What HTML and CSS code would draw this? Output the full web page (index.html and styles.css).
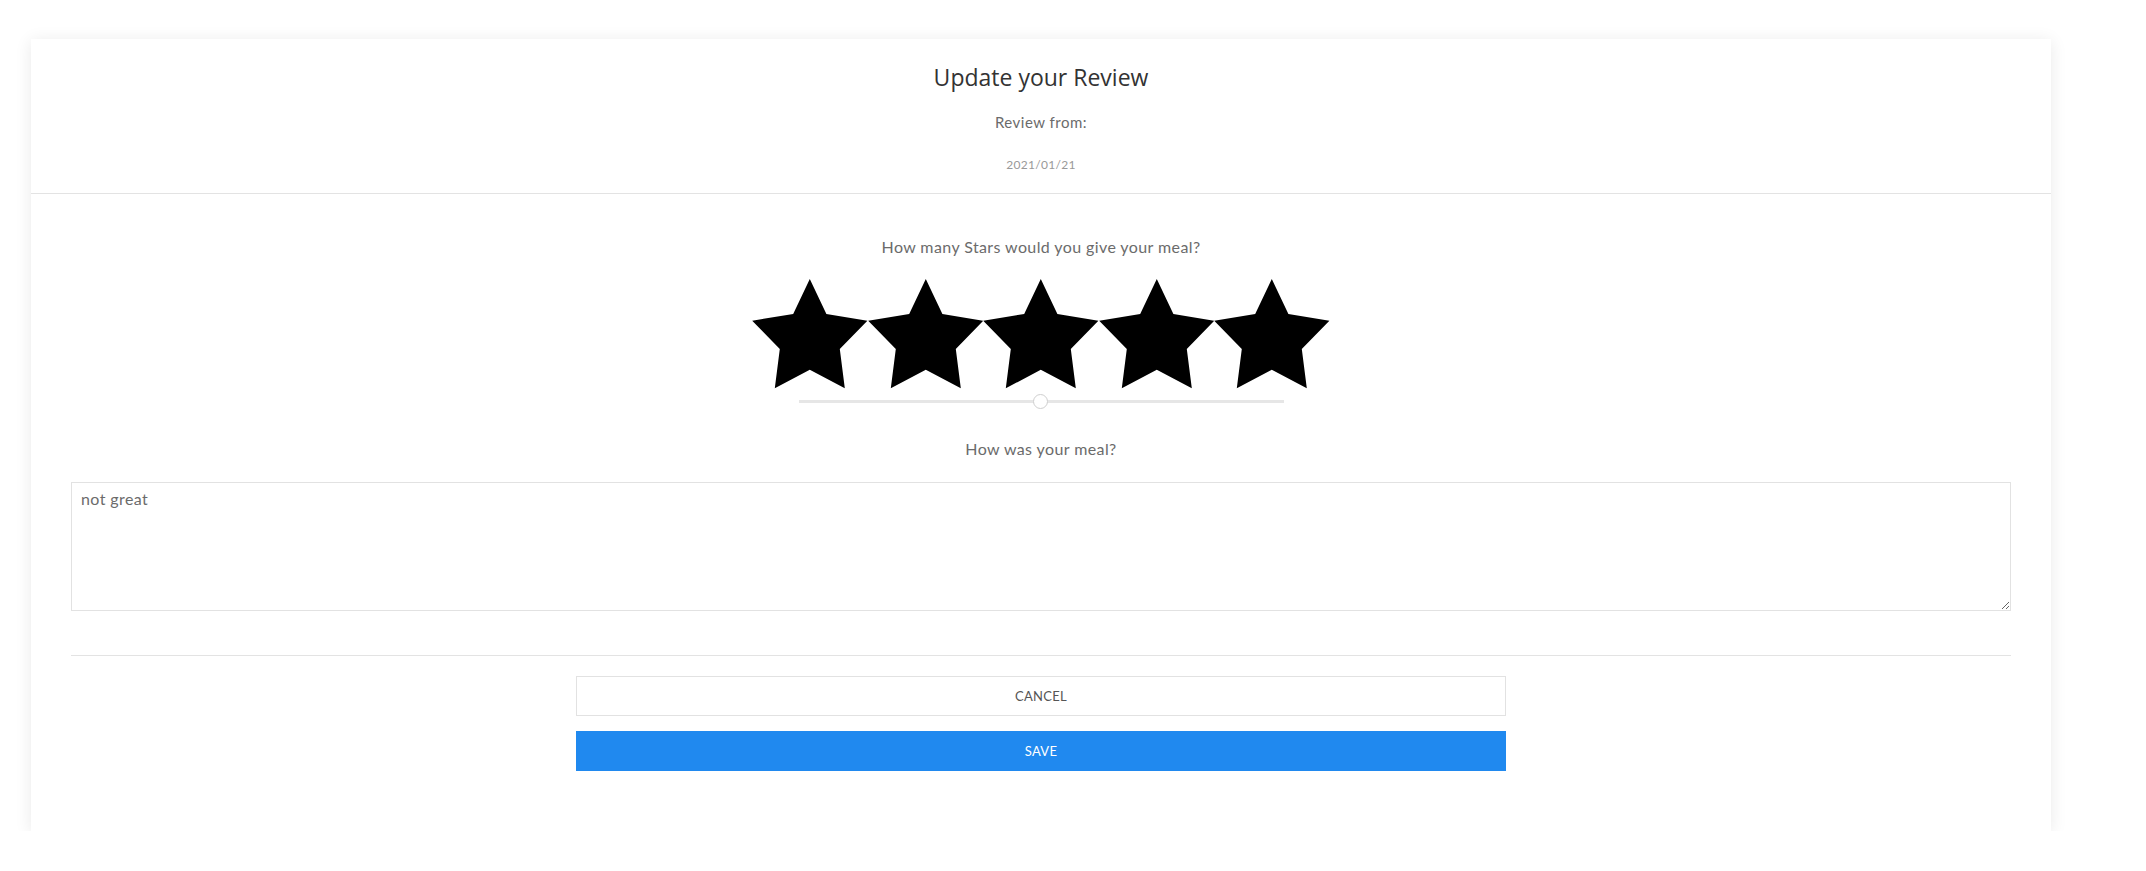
FILE: index.html
```html
<!DOCTYPE html>
<html lang="en">
<head>
<meta charset="utf-8">
<title>Update your Review</title>
<link rel="stylesheet" href="styles.css">
</head>
<body>
<div class="card">
  <div class="card-header">
    <h1 class="title">Update your Review</h1>
    <p class="subtitle">Review from:</p>
    <p class="date">2021/01/21</p>
  </div>
  <div class="card-body">
    <p class="question">How many Stars would you give your meal?</p>
    <div class="stars">
      <svg class="star" viewBox="0 0 115.2 110" aria-hidden="true"><polygon points="57.6,0 74.2,35 115.2,41.7 87.6,70 92.6,109.3 57.6,90.7 22.6,109.3 27.6,70 0,41.7 41,35"/></svg>
      <svg class="star" viewBox="0 0 115.2 110" aria-hidden="true"><polygon points="57.6,0 74.2,35 115.2,41.7 87.6,70 92.6,109.3 57.6,90.7 22.6,109.3 27.6,70 0,41.7 41,35"/></svg>
      <svg class="star" viewBox="0 0 115.2 110" aria-hidden="true"><polygon points="57.6,0 74.2,35 115.2,41.7 87.6,70 92.6,109.3 57.6,90.7 22.6,109.3 27.6,70 0,41.7 41,35"/></svg>
      <svg class="star" viewBox="0 0 115.2 110" aria-hidden="true"><polygon points="57.6,0 74.2,35 115.2,41.7 87.6,70 92.6,109.3 57.6,90.7 22.6,109.3 27.6,70 0,41.7 41,35"/></svg>
      <svg class="star" viewBox="0 0 115.2 110" aria-hidden="true"><polygon points="57.6,0 74.2,35 115.2,41.7 87.6,70 92.6,109.3 57.6,90.7 22.6,109.3 27.6,70 0,41.7 41,35"/></svg>
    </div>
    <div class="slider">
      <div class="track"></div>
      <div class="thumb"></div>
    </div>
    <p class="question meal">How was your meal?</p>
    <textarea class="review-text">not great</textarea>
    <hr class="divider">
    <div class="actions">
      <button class="btn btn-cancel" type="button">Cancel</button>
      <button class="btn btn-save" type="button">Save</button>
    </div>
  </div>
</div>
</body>
</html>
```

FILE: styles.css
```css
* { box-sizing: border-box; }

html, body {
  margin: 0;
  padding: 0;
  background: #ffffff;
}

body {
  font-family: Lato, "Open Sans", "Liberation Sans", sans-serif;
  color: #6b6b6b;
}

.card {
  margin: 39px 0 0 31px;
  width: 2020px;
  background: #ffffff;
  box-shadow: 0 2px 16px rgba(0, 0, 0, 0.09);
}

.card-header {
  padding: 23px 0 20px;
  border-bottom: 1px solid #e3e3e3;
  text-align: center;
}

.title {
  margin: 0;
  font-family: "Open Sans", "Noto Sans", sans-serif;
  font-weight: 400;
  font-size: 23px;
  line-height: 30px;
  color: #333333;
}

.subtitle {
  margin: 20px 0 0;
  font-size: 15px;
  line-height: 20px;
  letter-spacing: 0.5px;
  color: #6b6b6b;
}

.date {
  margin: 25px 0 0;
  font-size: 12px;
  line-height: 16px;
  color: #999999;
  letter-spacing: 0.3px;
}

.card-body {
  padding: 43px 40px 60px;
  display: flex;
  flex-direction: column;
  align-items: center;
}

.question {
  margin: 0;
  font-size: 16px;
  line-height: 20px;
  letter-spacing: 0.4px;
  color: #6b6b6b;
}

.stars {
  margin-top: 22px;
  display: flex;
  height: 110px;
}

.star {
  width: 115.6px;
  height: 110px;
  display: block;
}

.star polygon { fill: #000000; }

.slider {
  position: relative;
  margin-top: 5px;
  width: 485px;
  height: 15px;
  display: flex;
  align-items: center;
}

.track {
  width: 100%;
  height: 3px;
  background: #e6e6e6;
}

.thumb {
  position: absolute;
  left: 50%;
  top: 0;
  width: 15px;
  height: 15px;
  margin-left: -8px;
  border-radius: 50%;
  background: #ffffff;
  border: 1px solid #cfcfcf;
}

.meal {
  margin-top: 30px;
}

.review-text {
  margin-top: 23px;
  width: 100%;
  height: 129px;
  padding: 6px 9px;
  border: 1px solid #e2e2e2;
  border-radius: 0;
  font-family: Lato, "Open Sans", sans-serif;
  font-size: 16px;
  letter-spacing: 0.4px;
  line-height: 20px;
  color: #6b6b6b;
  background: #ffffff;
  resize: both;
  outline: none;
}

.divider {
  width: 100%;
  margin: 44px 0 0;
  border: 0;
  border-top: 1px solid #e3e3e3;
  height: 0;
}

.actions {
  margin-top: 20px;
  display: flex;
  flex-direction: column;
  gap: 15px;
  width: 930px;
}

.btn {
  height: 40px;
  width: 100%;
  font-family: Lato, "Open Sans", sans-serif;
  font-size: 13px;
  letter-spacing: 0.3px;
  text-transform: uppercase;
  border-radius: 0;
  cursor: pointer;
}

.btn-cancel {
  background: #ffffff;
  border: 1px solid #e2e2e2;
  color: #555555;
}

.btn-save {
  background: #2089ef;
  border: 0;
  color: #ffffff;
}
```
